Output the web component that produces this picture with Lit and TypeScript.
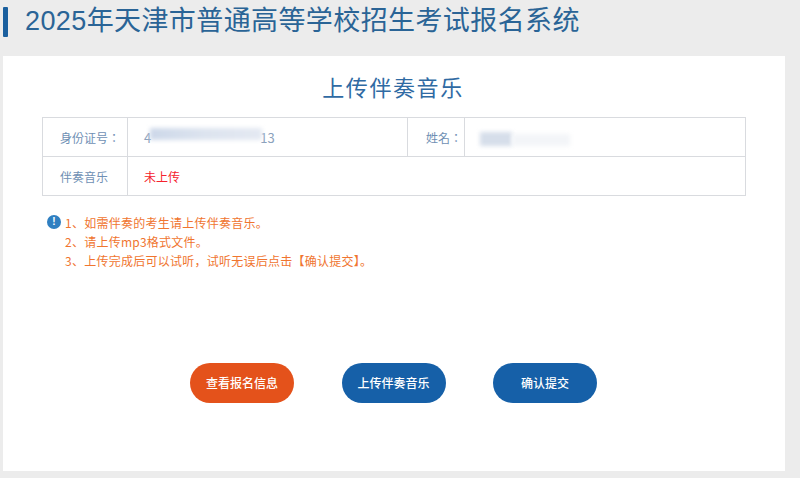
import { LitElement, html, css } from "lit";
import { customElement } from "lit/decorators.js";

@customElement("app-root")
export class AppRoot extends LitElement {
  static styles = css`
    :host { display: block; width: 800px; height: 478px; background: #ececec; overflow: hidden;
      font-family: "Noto Sans CJK SC", "Liberation Sans", sans-serif; }
    * { box-sizing: border-box; }
    .head { height: 56px; padding: 7px 0 0 3px; display: flex; align-items: flex-start; gap: 17px; }
    .bar { width: 5px; height: 30px; background: #1a5f9e; border-radius: 1px; }
    .title { font-size: 27px; line-height: 30px; letter-spacing: 0.4px; color: #2a6496; margin-top: -1px; font-family: "Liberation Sans", "Noto Sans CJK SC", sans-serif; white-space: nowrap; }
    .card { margin-left: 3px; width: 782px; height: 415px; background: #fff; padding: 15px 39px 0; display: flex; flex-direction: column; }
    h1 { margin: 0 2px 0 0; height: 46px; text-align: center; font-weight: 400; font-size: 22px; line-height: 30px; letter-spacing: 1.6px; color: #2f6aa3; }
    .table { width: 704px; height: 79px; border: 1px solid #d9dbdf; display: grid; grid-template-columns: 85px 280px 57px 1fr; grid-template-rows: 39px 1fr; font-size: 12px; color: #5b7fa6; }
    .cell { display: flex; align-items: center; border-right: 1px solid #d9dbdf; border-bottom: 1px solid #d9dbdf; }
    .cell.last { border-right: 0; }
    .cell.bottom { border-bottom: 0; }
    .label { justify-content: flex-start; padding-left: 17px; color: #6f90b4; font-family: "Noto Sans CJK TC", sans-serif; }
    .label.name { padding-left: 18px; }
    .value { padding-left: 16px; }
    .wide { grid-column: 2 / 5; border-right: 0; border-bottom: 0; color: #f5222d; }
    .id { position: relative; display: flex; width: 135px; color: #8ba1bc; font-size: 13px; }
    .id-gap { width: 109px; }
    .smear { position: absolute; background: linear-gradient(90deg, #cdd8e9, #dde4ef 50%, #e4e9f2); filter: blur(2px); }
    .s1 { left: 6px; top: 0; width: 112px; height: 12px; }
    .nm { position: relative; width: 100px; height: 22px; margin-left: -1px; }
    .s2 { left: 0; top: 6px; width: 32px; height: 14px; background: #d6deea; }
    .s3 { left: 32px; top: 8px; width: 58px; height: 12px; background: #f3f5f8; }
    .notes { margin: 17px 0 0 5px; display: flex; gap: 4px; font-size: 12px; line-height: 19px; letter-spacing: 0.25px; color: #f0752f; }
    .dot { flex: none; width: 14px; height: 14px; margin-top: 2px; border-radius: 50%; background: #2f7fc1; color: #fff; font: 700 10px/14px "Liberation Sans", sans-serif; text-align: center; letter-spacing: 0; }
    .notes p { margin: 0; white-space: nowrap; }
    .actions { margin-top: 93px; padding-left: 148px; display: flex; gap: 47.5px; }
    .btn { width: 104px; height: 40px; border: 0; border-radius: 20px; color: #fff; background: #1660a8; font: 500 12px/40px "Noto Sans CJK SC", sans-serif; text-align: center; padding: 0; }
    .btn.orange { background: #e4521b; }
  `;

  render() {
    return html`
      <div class="head"><span class="bar"></span><span class="title">2025年天津市普通高等学校招生考试报名系统</span></div>
      <div class="card">
        <h1>上传伴奏音乐</h1>
        <div class="table">
          <div class="cell label">身份证号：</div>
          <div class="cell value"><span class="id">4<span class="id-gap"></span>13<span class="smear s1"></span></span></div>
          <div class="cell label name">姓名：</div>
          <div class="cell value last"><span class="nm"><span class="smear s2"></span><span class="smear s3"></span></span></div>
          <div class="cell label bottom">伴奏音乐</div>
          <div class="cell value wide">未上传</div>
        </div>
        <div class="notes">
          <span class="dot">!</span>
          <div>
            <p>1、如需伴奏的考生请上传伴奏音乐。</p>
            <p>2、请上传mp3格式文件。</p>
            <p>3、上传完成后可以试听，试听无误后点击【确认提交】。</p>
          </div>
        </div>
        <div class="actions">
          <button class="btn orange">查看报名信息</button>
          <button class="btn">上传伴奏音乐</button>
          <button class="btn">确认提交</button>
        </div>
      </div>
    `;
  }
}
